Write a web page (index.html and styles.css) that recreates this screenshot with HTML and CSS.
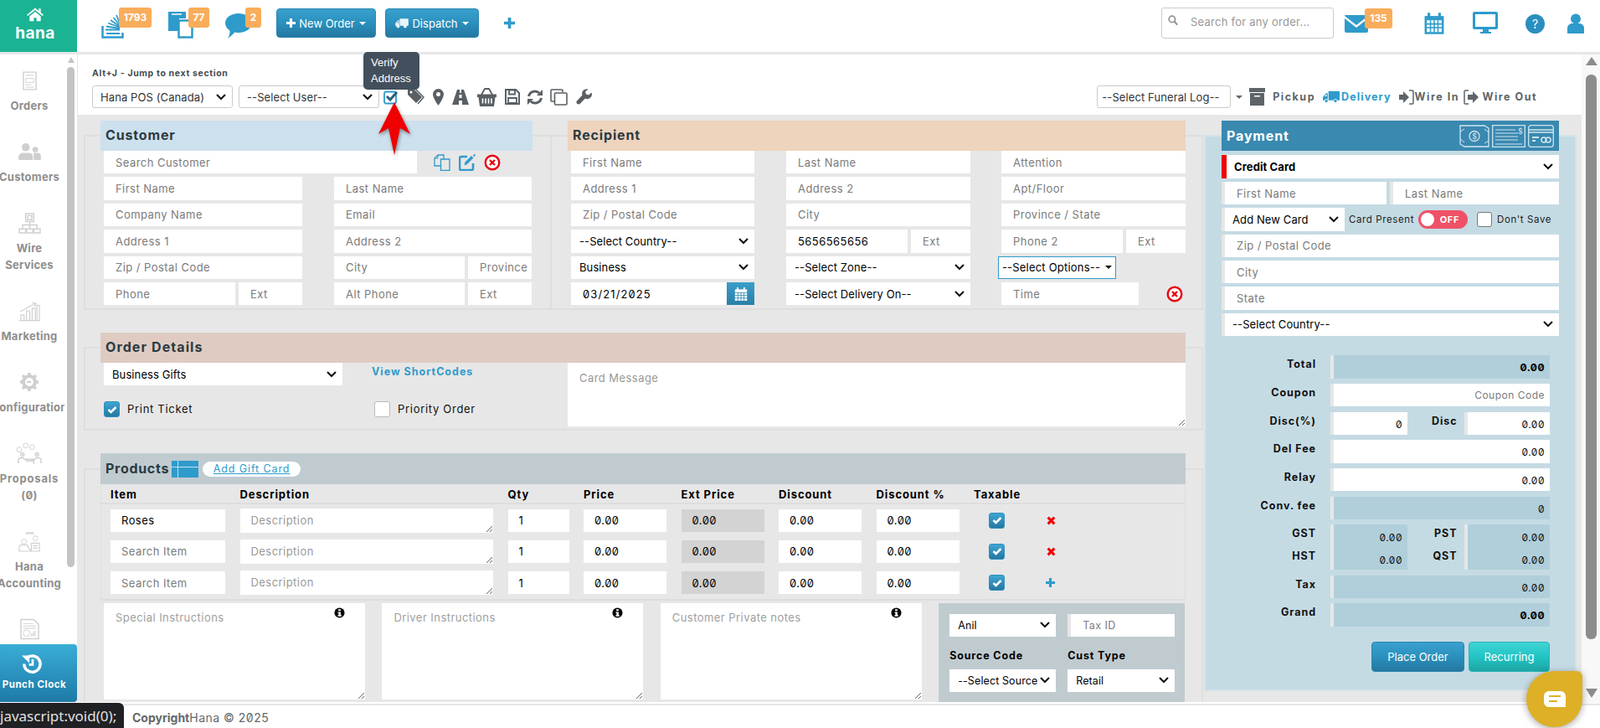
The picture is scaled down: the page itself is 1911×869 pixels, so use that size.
FILE: index.html
```html
<!DOCTYPE html>
<html lang="en">
<head>
<meta charset="utf-8">
<title>Hana POS</title>
<link rel="stylesheet" href="styles.css">
</head>
<body>
<svg class="sprite" aria-hidden="true">
  <symbol id="i-x" viewBox="0 0 20 20"><circle cx="10" cy="10" r="8.3" fill="#fff" stroke="#e8000d" stroke-width="2.4"/><path d="M7 7l6 6M13 7l-6 6" stroke="#e8000d" stroke-width="2.4"/></symbol>
  <symbol id="i-check" viewBox="0 0 14 14"><path d="M2.5 7l3 3 6-6" fill="none" stroke="#fff" stroke-width="2.6"/></symbol>
  <symbol id="i-plus" viewBox="0 0 12 12"><path d="M4.300 0h3.400v4.300H12v3.400H7.700V12H4.300V7.700H0V4.300h4.300z" fill="currentColor"/></symbol>
  <symbol id="i-truck" viewBox="0 0 24 20"><path d="M8 2h15a1 1 0 0 1 1 1v12H8zM1 9l4-4h2v10H0v-4zM2.500 9.500h3V6.800H5z" fill="currentColor"/><circle cx="5" cy="16" r="2.500" fill="currentColor" stroke="#fff"/><circle cx="18" cy="16" r="2.500" fill="currentColor" stroke="#fff"/></symbol>
  <symbol id="i-info" viewBox="0 0 14 14"><circle cx="7" cy="7" r="6.500"/><path d="M5.500 2.500h3v2h-3zM4.800 5.800h3.700v4.200h1v1.500H4.800V10h1V7.300h-1z" fill="#fff"/></symbol>
  <symbol id="i-del" viewBox="0 0 10 10"><path d="M1.500 1.500l7 7M8.500 1.500l-7 7" stroke="#f00000" stroke-width="2.800"/></symbol>
  <symbol id="i-cal" viewBox="0 0 20 22"><path d="M1 4h18v17H1z" fill="currentColor"/><path d="M5 1v5M15 1v5" stroke="currentColor" stroke-width="2.500"/><path d="M3 8h14v11H3z" fill="#fff"/><path d="M3 11.500h14M3 15h14M6.500 8v11M10 8v11M13.500 8v11" stroke="currentColor" stroke-width="1.200"/></symbol>
  <symbol id="i-cal-w" viewBox="0 0 20 22"><path d="M1 4h18v17H1z" fill="#fff"/><path d="M5 1v5M15 1v5" stroke="#fff" stroke-width="2.500"/><path d="M1 9h18M1 13h18M1 17h18M5.500 9v12M10 9v12M14.500 9v12" stroke="#2a86b0" stroke-width="1"/></symbol>
</svg>

<header class="topbar">
  <a class="logo" href="#">
    <svg class="logo-home" viewBox="0 0 24 20"><path d="M12 1L0 11l1.500 1.500L12 4l10.500 8.500L24 11l-4-3.300V2h-3v3.200zM4 13v7h6v-5h4v5h6v-7l-8-6.500z" fill="#fff"/></svg>
    <span>hana</span>
  </a>
  <a class="tool tool-stack" href="#">
    <svg viewBox="0 0 28 32" width="28" height="32"><path d="M1.500 17v13.500h24V25" fill="none" stroke="#2f9bcb" stroke-width="2.500"/><path d="M6 26h16M5 21.500h17M6 17.500l16 2.500M8 13.500l14 5M11 10l11 7.500M14.500 7l8 9.500M18 4l5 12" fill="none" stroke="#2f9bcb" stroke-width="1.800"/></svg>
    <b class="badge">1793</b>
  </a>
  <a class="tool tool-docs" href="#">
    <svg viewBox="0 0 33 33" width="33" height="33"><path d="M1 1h21v8h-8v15H1z" fill="#2f9bcb"/><path d="M5 4h12" stroke="#fff" stroke-width="1.500"/><path d="M13.500 11.500h16v20h-16z" fill="#fff" stroke="#2f9bcb" stroke-width="2.500"/></svg>
    <b class="badge">77</b>
  </a>
  <a class="tool tool-chat" href="#">
    <svg viewBox="0 0 33 32" width="33" height="32"><path d="M17 1c9 0 15.500 5 15.500 11.500S26 24 17 24c-2 0-3 0-4.500-.5C10 26 7 29 4 31c2-3 2.500-6 2.500-9.500C3 19.500 1 16 1 12.500 1 6 8 1 17 1z" fill="#2f9bcb"/></svg>
    <b class="badge">2</b>
  </a>
  <a class="btn btn-order" href="#"><svg class="plus" width="11" height="11"><use href="#i-plus"/></svg>New Order<i class="caret"></i></a>
  <a class="btn btn-dispatch" href="#"><svg class="btn-truck" width="16" height="13"><use href="#i-truck"/></svg>Dispatch<i class="caret"></i></a>
  <a class="add" href="#" aria-label="Add"><svg width="13" height="13"><use href="#i-plus"/></svg></a>
  <label class="search">
    <svg viewBox="0 0 14 14" width="16" height="16"><circle cx="5.700" cy="5.700" r="4.300" fill="none" stroke="#8f8f8f" stroke-width="2"/><path d="M9 9l4 4.500" stroke="#8f8f8f" stroke-width="2.400"/></svg>
    <input type="text" placeholder="Search for any order...">
  </label>
  <a class="tool tool-mail" href="#">
    <svg viewBox="0 0 28 21" width="28" height="21"><path d="M1 0h26a1 1 0 0 1 1 1L14 12 0 1a1 1 0 0 1 1-1zM0 4l14 11L28 4v15a2 2 0 0 1-2 2H2a2 2 0 0 1-2-2z" fill="#2f9bcb"/></svg>
    <b class="badge">135</b>
  </a>
  <svg class="ico-cal" width="26" height="28"><use href="#i-cal"/></svg>
  <svg class="ico-monitor" viewBox="0 0 30 26" width="30" height="26"><path d="M2 0h26a2 2 0 0 1 2 2v17a2 2 0 0 1-2 2H19v3h3v2H9v-2h3v-3H2a2 2 0 0 1-2-2V2a2 2 0 0 1 2-2zm1 3v15h24V3z" fill="#2f9bcb"/></svg>
  <span class="ico-help">?</span>
  <svg class="ico-user" viewBox="0 0 20 24" width="20" height="24"><circle cx="10" cy="6.500" r="6" fill="#2f9bcb"/><path d="M0 24v-6c0-4 3-6 6-6h8c3 0 6 2 6 6v6z" fill="#2f9bcb"/></svg>
</header>

<div class="workspace">
  <aside class="sidebar">
    <nav class="nav">
      <a class="nav-item" href="#"><span class="nav-icon"><svg viewBox="0 0 18 24" width="17" height="23"><path d="M1 1h16v22H1z" fill="none" stroke="#cfcfcf" stroke-width="1.500"/><path d="M4 5h10M4 9h10v5H4zM4 17h7M4 20h10" stroke="#cfcfcf" fill="none"/></svg></span><span>Orders</span></a>
      <a class="nav-item" href="#"><span class="nav-icon"><svg viewBox="0 0 28 21" width="27" height="20"><circle cx="9" cy="5" r="5" fill="#cfcfcf"/><circle cx="21" cy="8" r="3.500" fill="#cfcfcf"/><path d="M0 21v-4c0-3 3-5 5-5h8c2 0 5 2 5 5v4zM19 21v-5c0-2 0-3-1-4h6c2 0 4 1 4 4v5z" fill="#cfcfcf"/></svg></span><span>Customers</span></a>
      <a class="nav-item" href="#"><span class="nav-icon"><svg viewBox="0 0 28 26" width="27" height="25"><path d="M9 1h10v10H9zM11.500 3.500h5v5h-5zM14 11v4M5 20v-5h18v5M14 15v5M1 20h8v5H1zM10 20h8v5h-8zM19 20h8v5h-8z" fill="none" stroke="#cfcfcf" stroke-width="1.500"/></svg></span><span>Wire</span><span>Services</span></a>
      <a class="nav-item" href="#"><span class="nav-icon"><svg viewBox="0 0 28 25" width="27" height="25"><path d="M1 24h26M3 24v-7h4v7M10 24V12h4v12M17 24V9h4v15M23 24V5h3v19M2 13L21 3M17 2l5 1-2 4" fill="none" stroke="#cfcfcf" stroke-width="1.200"/></svg></span><span>Marketing</span></a>
      <a class="nav-item" href="#"><span class="nav-icon"><svg viewBox="0 0 24 24" width="24" height="24"><circle cx="12" cy="12" r="7" fill="none" stroke="#cfcfcf" stroke-width="4"/><path d="M12 1v5M12 18v5M1 12h5M18 12h5M4 4l4 4M16 16l4 4M20 4l-4 4M8 16l-4 4" stroke="#cfcfcf" stroke-width="3.500"/><path d="M9 12h5" stroke="#cfcfcf" stroke-width="2"/></svg></span><span>Configuration</span></a>
      <a class="nav-item" href="#"><span class="nav-icon"><svg viewBox="0 0 34 28" width="33" height="27"><circle cx="4" cy="9" r="3" fill="none" stroke="#cfcfcf"/><circle cx="12" cy="4" r="3" fill="none" stroke="#cfcfcf"/><circle cx="20" cy="6" r="3" fill="none" stroke="#cfcfcf"/><circle cx="8" cy="15" r="3" fill="#dcdcdc"/><circle cx="26" cy="15" r="3" fill="#dcdcdc"/><path d="M3 26v-4c0-2 2-3 5-3l6 4h6l6-4c3 0 5 1 5 3v4M12 21h10v6" fill="none" stroke="#cfcfcf" stroke-width="1.500"/></svg></span><span class="wide">Proposals</span><span>(0)</span></a>
      <a class="nav-item" href="#"><span class="nav-icon"><svg viewBox="0 0 28 26" width="27" height="25"><path d="M8 4h12l-2-3h-8z" fill="#dcdcdc"/><circle cx="7" cy="13" r="3" fill="none" stroke="#cfcfcf"/><circle cx="21" cy="9" r="3" fill="none" stroke="#cfcfcf"/><path d="M1 25v-5c0-2 2-3 4-3h4c2 0 3 1 3 3l4 5zM16 25V15h10v10zM18 18h6M18 21h6" fill="none" stroke="#cfcfcf" stroke-width="1.200"/></svg></span><span>Hana</span><span>Accounting</span></a>
      <a class="nav-item" href="#"><span class="nav-icon"><svg viewBox="0 0 24 26" width="23" height="26"><path d="M1 1h16l6 6v18H1z" fill="none" stroke="#cfcfcf" stroke-width="1.500"/><path d="M4 6h12M4 9h16M4 12h16" stroke="#cfcfcf"/><circle cx="8" cy="18" r="4" fill="none" stroke="#cfcfcf"/><path d="M14 22v-3h2v3M17 22v-6h2v6" stroke="#cfcfcf" fill="none"/></svg></span></a>
    </nav>
    <div class="side-scroll"><i class="up"></i><i class="thumb"></i></div>
    <a class="punch" href="#">
      <svg viewBox="0 0 28 28" width="27" height="27"><path d="M4 14a10 10 0 1 0 3-7" fill="none" stroke="#fff" stroke-width="3.600"/><path d="M1 3.500h9.500V13z" fill="#fff"/><path d="M14.500 8v7H10" fill="none" stroke="#fff" stroke-width="2.800"/></svg>
      <span>Punch Clock</span>
    </a>
  </aside>

  <main class="main">
    <div class="toolbar">
      <p class="hint">Alt+J - Jump to next section</p>
      <div class="tool-row">
        <select class="tsel tsel-pos"><option>Hana POS (Canada)</option></select>
        <select class="tsel tsel-user"><option>--Select User--</option></select>
        <div class="tool-icons">
          <svg width="18" height="18" viewBox="0 0 18 18"><rect x="1" y="2.500" width="14" height="14" rx="2" fill="none" stroke="#2f9bcb" stroke-width="1.800"/><path d="M4 8l4 4 8-9" fill="none" stroke="#2b5e7c" stroke-width="3"/></svg>
          <svg width="21" height="21" viewBox="0 0 21 21"><path d="M1 1h7l10 10-7 7L1 8z" fill="#595f63"/><path d="M10 1l10 10-7 8" fill="none" stroke="#595f63" stroke-width="1.500"/><circle cx="5" cy="5" r="1.500" fill="#fff"/></svg>
          <svg width="13" height="20" viewBox="0 0 13 20"><path d="M6.500 0A6.500 6.500 0 0 0 0 6.500C0 11 6.500 20 6.500 20S13 11 13 6.500A6.500 6.500 0 0 0 6.500 0zm0 9A2.500 2.500 0 1 1 6.500 4a2.500 2.500 0 0 1 0 5z" fill="#595f63"/></svg>
          <svg width="20" height="18" viewBox="0 0 20 18"><path d="M6 0h3v4h2V0h3l6 18h-8v-5H8v5H0zM8.500 6v4h3V6z" fill="#595f63"/></svg>
          <svg width="23" height="22" viewBox="0 0 23 22"><path d="M5 8l4-7h5l4 7" fill="none" stroke="#595f63" stroke-width="1.800"/><path d="M0 7.500h23V11h-1.500L20 22H3L1.500 11H0z" fill="#595f63"/><path d="M6.500 12.500v6M10 12.500v6M13.500 12.500v6M17 12.500v6" stroke="#fff" stroke-width="1.600"/></svg>
          <svg width="18" height="19" viewBox="0 0 18 19"><path d="M1 1h12l4 4v13H1z" fill="none" stroke="#595f63" stroke-width="2"/><path d="M5 1.500h7v5H5zM4 11h10v6H4z" fill="none" stroke="#595f63" stroke-width="1.800"/></svg>
          <svg class="tight" width="20" height="18" viewBox="0 0 20 18"><path d="M2.500 8A7.500 7.500 0 0 1 15 4" fill="none" stroke="#595f63" stroke-width="3"/><path d="M19 0v7h-7z" fill="#595f63"/><path d="M17.500 10A7.500 7.500 0 0 1 5 14" fill="none" stroke="#595f63" stroke-width="3"/><path d="M1 18v-7h7z" fill="#595f63"/></svg>
          <svg class="tight" width="21" height="20" viewBox="0 0 21 20"><path d="M15 4V2a1 1 0 0 0-1-1H2a1 1 0 0 0-1 1v12a1 1 0 0 0 1 1h3" fill="none" stroke="#595f63" stroke-width="1.600"/><rect x="5.500" y="5" width="14.500" height="14" rx="1" fill="none" stroke="#595f63" stroke-width="1.600"/></svg>
          <svg width="19" height="19" viewBox="0 0 19 19"><path d="M18.500 4.500l-3.500 3-3-1-1-3 3.500-3a5.500 5.500 0 0 0-7 7L1 14.500a2.500 2.500 0 0 0 3.500 3.500L11 11.500a5.500 5.500 0 0 0 7.500-7z" fill="#595f63"/></svg>
        </div>
        <div class="tool-right">
          <select class="tsel tsel-log"><option>--Select Funeral Log--</option></select>
          <i class="caret caret-log"></i>
          <svg class="mode-ico" width="19" height="21" viewBox="0 0 19 21"><path d="M0 0h19v5H0zM1 6h17v15H1z" fill="#5e6468"/><path d="M6 9h7v1.500H6z" fill="#fff"/></svg>
          <a class="mode mode-pick" href="#">Pickup</a>
          <svg class="mode-truck" width="20" height="19"><use href="#i-truck"/></svg>
          <a class="mode mode-del" href="#">Delivery</a>
          <svg class="mode-ico2" width="18" height="18" viewBox="0 0 18 18"><path d="M0 6h5V2l7 7-7 7v-4H0z" fill="#5e6468"/><path d="M12 1h4a1 1 0 0 1 1 1v14a1 1 0 0 1-1 1h-4" fill="none" stroke="#5e6468" stroke-width="1.500"/></svg>
          <a class="mode mode-in" href="#">Wire In</a>
          <svg class="mode-ico3" width="18" height="18" viewBox="0 0 18 18"><path d="M6 1H2a1 1 0 0 0-1 1v14a1 1 0 0 0 1 1h4" fill="none" stroke="#5e6468" stroke-width="1.500"/><path d="M5 6h6V2l7 7-7 7v-4H5z" fill="#5e6468"/></svg>
          <a class="mode mode-out" href="#">Wire Out</a>
        </div>
      </div>
    </div>

    <div class="board">
      <div class="forms">
        <div class="top-sets">
          <fieldset class="set set-customer">
            <legend class="head head-customer">Customer</legend>
            <div class="search-row">
              <input class="f search-cust" placeholder="Search Customer">
              <div class="cust-actions">
                <svg width="20" height="20" viewBox="0 0 20 20"><path d="M8 14H1V5l4-4h7v5" fill="none" stroke="#2f9bcb" stroke-width="1.300"/><path d="M8.500 6H15l4 0v13.500H8.500z" fill="none" stroke="#2f9bcb" stroke-width="1.300"/><path d="M1 5h4V1" fill="none" stroke="#2f9bcb"/></svg>
                <svg width="20" height="20" viewBox="0 0 20 20"><path d="M10 3H3a2 2 0 0 0-2 2v12a2 2 0 0 0 2 2h12a2 2 0 0 0 2-2v-6" fill="none" stroke="#2f9bcb" stroke-width="2.600"/><path d="M6.500 13.500l1-4L15 2l2.500 2.500L10 12z" fill="#2f9bcb"/><circle cx="18.500" cy="1.500" r="1.300" fill="#2f9bcb"/></svg>
                <svg width="20" height="20"><use href="#i-x"/></svg>
              </div>
            </div>
            <div class="grid-customer">
              <input class="f s2" placeholder="First Name">
              <input class="f s2b" placeholder="Last Name">
              <input class="f s2" placeholder="Company Name">
              <input class="f s2b" placeholder="Email">
              <input class="f s2" placeholder="Address 1">
              <input class="f s2b" placeholder="Address 2">
              <input class="f s2" placeholder="Zip / Postal Code">
              <input class="f c4" placeholder="City">
              <input class="f" placeholder="Province">
              <input class="f" placeholder="Phone">
              <input class="f" placeholder="Ext">
              <input class="f c4" placeholder="Alt Phone">
              <input class="f" placeholder="Ext">
            </div>
          </fieldset>

          <fieldset class="set set-recipient">
            <legend class="head head-recipient">Recipient</legend>
            <div class="grid-recipient">
              <input class="f r1" placeholder="First Name">
              <input class="f r2" placeholder="Last Name">
              <input class="f r3" placeholder="Attention">
              <input class="f r1" placeholder="Address 1">
              <input class="f r2" placeholder="Address 2">
              <input class="f r3" placeholder="Apt/Floor">
              <input class="f r1" placeholder="Zip / Postal Code">
              <input class="f r2" placeholder="City">
              <input class="f r3" placeholder="Province / State">
              <select class="s r1"><option>--Select Country--</option></select>
              <input class="f c3" value="5656565656">
              <input class="f" placeholder="Ext">
              <input class="f c6" placeholder="Phone 2">
              <input class="f" placeholder="Ext">
              <select class="s r1"><option>Business</option></select>
              <select class="s r2"><option>--Select Zone--</option></select>
              <div class="r3"><a class="opt-btn" href="#">--Select Options--<i class="caret caret-dark"></i></a></div>
              <div class="date r1"><input class="f" value="03/21/2025"><span class="date-btn"><svg width="16" height="18"><use href="#i-cal-w"/></svg></span></div>
              <select class="s r2"><option>--Select Delivery On--</option></select>
              <div class="time r3"><input class="f" placeholder="Time"><svg width="20" height="20"><use href="#i-x"/></svg></div>
            </div>
          </fieldset>
        </div>

        <fieldset class="set set-order">
          <legend class="head head-order">Order Details</legend>
          <div class="grid-order">
            <select class="s order-sel"><option>Business Gifts</option></select>
            <a class="codes" href="#">View ShortCodes</a>
            <textarea class="msg" placeholder="Card Message"></textarea>
            <label class="chk-line"><span class="chk on"><svg width="14" height="14"><use href="#i-check"/></svg></span>Print Ticket</label>
            <label class="chk-line prio"><span class="chk"></span>Priority Order</label>
          </div>
        </fieldset>

        <fieldset class="set set-products">
          <legend class="head head-products">Products<span class="gift-img"></span><a class="gift-link" href="#"><u>Add Gift Card</u></a></legend>
          <div class="table">
            <div class="t-row t-head"><span>Item</span><span>Description</span><span>Qty</span><span>Price</span><span>Ext Price</span><span>Discount</span><span>Discount %</span><span>Taxable</span></div>
            <div class="t-row">
              <input class="f" value="Roses"><textarea class="desc" placeholder="Description"></textarea><input class="f" value="1"><input class="f num" value="0.00"><input class="f num ro" value="0.00"><input class="f num" value="0.00"><input class="f num" value="0.00">
              <span class="chk on tax"><svg width="14" height="14"><use href="#i-check"/></svg></span><svg class="act" width="11" height="11"><use href="#i-del"/></svg>
            </div>
            <div class="t-row">
              <input class="f" placeholder="Search Item"><textarea class="desc" placeholder="Description"></textarea><input class="f" value="1"><input class="f num" value="0.00"><input class="f num ro" value="0.00"><input class="f num" value="0.00"><input class="f num" value="0.00">
              <span class="chk on tax"><svg width="14" height="14"><use href="#i-check"/></svg></span><svg class="act" width="11" height="11"><use href="#i-del"/></svg>
            </div>
            <div class="t-row">
              <input class="f" placeholder="Search Item"><textarea class="desc" placeholder="Description"></textarea><input class="f" value="1"><input class="f num" value="0.00"><input class="f num ro" value="0.00"><input class="f num" value="0.00"><input class="f num" value="0.00">
              <span class="chk on tax"><svg width="14" height="14"><use href="#i-check"/></svg></span><svg class="act act-add" width="11" height="11"><use href="#i-plus"/></svg>
            </div>
          </div>
          <div class="notes">
            <div class="note"><textarea placeholder="Special Instructions"></textarea><svg class="info" width="13" height="13"><use href="#i-info"/></svg></div>
            <div class="note"><textarea placeholder="Driver Instructions"></textarea><svg class="info" width="13" height="13"><use href="#i-info"/></svg></div>
            <div class="note"><textarea placeholder="Customer Private notes"></textarea><svg class="info" width="13" height="13"><use href="#i-info"/></svg></div>
            <div class="extra">
              <select class="s"><option>Anil</option></select>
              <input class="f left-rule" placeholder="Tax ID">
              <b>Source Code</b><b>Cust Type</b>
              <select class="s"><option>--Select Source--</option></select>
              <select class="s"><option>Retail</option></select>
            </div>
          </div>
        </fieldset>
      </div>

      <fieldset class="set set-payment">
        <legend class="head head-payment">Payment
          <span class="pay-icons">
            <svg width="36" height="27" viewBox="0 0 36 27"><path d="M1 1h29l5 3v22H6l-5-3z" fill="none" stroke="#cfe6f0" stroke-width="1.300"/><circle cx="18" cy="13.500" r="6" fill="none" stroke="#cfe6f0" stroke-width="1.300"/><path d="M1 8l5-3M35 19l-5 3M1 17l5 4M35 9l-5-4" stroke="#cfe6f0"/><text x="15.300" y="17" class="pay-dollar">$</text></svg>
            <svg width="40" height="27" viewBox="0 0 40 27"><path d="M.7.7h38.600v25.600H.7z" fill="none" stroke="#cfe6f0" stroke-width="1.300"/><path d="M4 6h24M4 10h27M4 14h27M4 18h27M4 23h32" stroke="#cfe6f0" stroke-width="1.200"/><text x="31" y="11" class="pay-dollar">$</text></svg>
            <svg width="31" height="27" viewBox="0 0 31 27"><rect x=".7" y=".7" width="29.600" height="25.600" rx="3" fill="none" stroke="#cfe6f0" stroke-width="1.300"/><path d="M1 6h29M1 9h29" stroke="#cfe6f0" stroke-width="1.500"/><path d="M5 15h8M5 19h4" stroke="#cfe6f0" stroke-width="2"/><circle cx="19" cy="18" r="3" fill="none" stroke="#cfe6f0" stroke-width="1.500"/><circle cx="24" cy="18" r="3" fill="none" stroke="#cfe6f0" stroke-width="1.500"/></svg>
          </span>
        </legend>
        <div class="pay-form">
          <select class="s pay-type"><option>Credit Card</option></select>
          <div class="pair"><input class="f left-rule" placeholder="First Name"><input class="f left-rule" placeholder="Last Name"></div>
          <div class="card-row">
            <select class="s left-rule card-sel"><option>Add New Card</option></select>
            <span class="card-lab">Card Present</span>
            <span class="toggle"><i></i>OFF</span>
            <span class="chk save"></span>
            <span class="card-lab">Don't Save</span>
          </div>
          <input class="f left-rule" placeholder="Zip / Postal Code">
          <input class="f left-rule" placeholder="City">
          <input class="f left-rule" placeholder="State">
          <select class="s left-rule"><option>--Select Country--</option></select>
        </div>
        <div class="totals">
          <label>Total</label><output class="v strong">0.00</output>
          <label>Coupon</label><input class="v light" placeholder="Coupon Code">
          <label>Disc(%)</label><div class="split"><output class="v light">0</output><label>Disc</label><output class="v light">0.00</output></div>
          <label>Del Fee</label><output class="v light">0.00</output>
          <label>Relay</label><output class="v light">0.00</output>
          <label>Conv. fee</label><output class="v">0</output>
          <div class="stack"><label>GST</label><label>HST</label></div>
          <div class="split split-tall"><output class="v"><span>0.00</span><span>0.00</span></output><div class="stack"><label>PST</label><label>QST</label></div><output class="v"><span>0.00</span><span>0.00</span></output></div>
          <label>Tax</label><output class="v">0.00</output>
          <label>Grand</label><output class="v strong">0.00</output>
        </div>
        <div class="pay-btns">
          <a class="btn btn-place" href="#">Place Order</a>
          <a class="btn btn-recur" href="#">Recurring</a>
        </div>
      </fieldset>
    </div>
  </main>

  <div class="page-scroll"><i class="up"></i><i class="thumb"></i><i class="down"></i></div>
</div>

<footer class="footer"><b>Copyright</b>Hana © 2025</footer>

<div class="tooltip">Verify Address</div>
<svg class="red-arrow" width="40" height="64" viewBox="0 0 40 64"><path d="M19 0l19 38-12-7-7 32-7-32-12 7z" fill="#f00000"/></svg>
<div class="status">javascript:void(0);</div>
<a class="chat" href="#" aria-label="Chat"><svg width="26" height="19" viewBox="0 0 26 19"><path d="M6 0h14a6 6 0 0 1 6 6v13H6a6 6 0 0 1-6-6V6a6 6 0 0 1 6-6z" fill="#fff"/><path d="M6 6h14M6 12h10" stroke="#deb027" stroke-width="2.200"/></svg></a>
</body>
</html>
```
FILE: styles.css
```css
* { box-sizing: border-box; }
html, body { margin: 0; height: 869px; overflow: hidden; }
body {
  display: flex; flex-direction: column; position: relative;
  font: 13px "Inter", "Liberation Sans", sans-serif;
  font-feature-settings: "zero";
  background: #fff; color: #000;
}
a { text-decoration: none; color: inherit; }
.sprite { display: none; }
input, select, textarea { font: inherit; font-feature-settings: "zero"; letter-spacing: .45px; }
::placeholder { color: #7b7b7b; opacity: 1; }
select {
  appearance: none; letter-spacing: .1px;
  background-image: url("data:image/svg+xml,%3Csvg xmlns='http://www.w3.org/2000/svg' width='12' height='8'%3E%3Cpath d='M1 1l5 5 5-5' fill='none' stroke='%23111' stroke-width='2'/%3E%3C/svg%3E");
  background-repeat: no-repeat; background-position: right 7px center; background-size: 12px 8px;
  padding-right: 22px;
}

/* top bar */
.topbar { height: 65px; flex: none; display: flex; align-items: flex-start; border-bottom: 3px solid #e7e7e7; color: #2f9bcb; }
.logo { width: 92px; height: 62px; background: #1ab394; color: #fff; display: flex; flex-direction: column; align-items: center; font: 700 19px "Inter", sans-serif; letter-spacing: .5px; padding: 8px 8px 0 0; flex: none; }
.logo-home { width: 20px; height: 18px; }
.logo span { margin-top: 3px; line-height: 22px; }
.tool { position: relative; display: block; flex: none; }
.tool svg { display: block; }
.badge { position: absolute; top: 0; background: #f9ad5b; color: #fff; border-radius: 3px; font: 700 12px/24px "Inter", sans-serif; text-align: center; height: 24px; }
.tool-stack { margin: 14px 0 0 29px; width: 28px; }
.tool-stack .badge { left: 21px; top: -5px; width: 39px; }
.tool-docs { margin: 13px 0 0 51px; width: 33px; }
.tool-docs .badge { left: 25px; top: -4px; width: 25px; }
.tool-chat { margin: 15px 0 0 35px; width: 33px; }
.tool-chat .badge { left: 25px; top: -6px; width: 19px; }
.btn { display: flex; align-items: center; justify-content: center; color: #fff; border-radius: 4px; font-size: 13px; background: linear-gradient(#3aa0cd, #2a90bd 50%, #2478a0); border: 1px solid #2a87b0; }
.btn-order { width: 119px; height: 35px; margin: 10px 0 0 29px; flex: none; }
.btn-dispatch { width: 112px; height: 35px; margin: 10px 0 0 11px; flex: none; }
.plus { margin-right: 4px; color: #fff; flex: none; }
.btn-truck { margin-right: 4px; color: #e8f4fa; }
.caret { display: inline-block; width: 0; height: 0; border: 4px solid transparent; border-top-color: currentColor; border-bottom: 0; margin-left: 5px; }
.add { margin: 21px 0 0 30px; width: 14px; height: 14px; color: #2f9bcb; flex: none; }
.search { width: 206px; height: 37px; margin: 9px 0 0 771px; border: 1px solid #ccc; border-radius: 3px; display: flex; align-items: flex-start; padding: 6px 0 0 7px; flex: none; }
.search input { border: 0; outline: 0; width: 170px; margin: 2px 0 0 15px; font-size: 13px; padding: 0; letter-spacing: .25px; }
.search ::placeholder { color: #999; }
.tool-mail { margin: 18px 0 0 13px; width: 28px; }
.tool-mail .badge { left: 24px; top: -8px; width: 33px; }
.ico-cal { margin: 14px 0 0 66px; color: #2f9bcb; flex: none; }
.ico-monitor { margin: 14px 0 0 33px; flex: none; }
.ico-help { width: 23px; height: 23px; margin: 17px 0 0 33px; flex: none; border-radius: 50%; background: #2a8fbe; color: #fff; font-size: 14px; line-height: 23px; text-align: center; }
.ico-user { margin: 16px 0 0 27px; flex: none; }

/* workspace */
.workspace { flex: 1; display: flex; min-height: 0; }
.sidebar { width: 93px; flex: none; position: relative; display: flex; flex-direction: column; border-right: 1px solid #e7e7e7; overflow: hidden; }
.nav { flex: 1; width: 77px; overflow: hidden; padding-top: 18px; min-height: 0; }
.nav-item { width: 70px; display: flex; flex-direction: column; align-items: center; margin-bottom: 32px; color: #8e8e8e; font-weight: 700; font-size: 13px; line-height: 20px; letter-spacing: .25px; }
.nav-icon { height: 26px; margin-bottom: 7px; display: flex; align-items: center; justify-content: center; flex: none; }
.nav-item span { white-space: nowrap; }
.nav-item .wide { letter-spacing: .8px; }
.side-scroll { position: absolute; left: 80px; top: 0; width: 9px; height: 612px; display: flex; flex-direction: column; align-items: center; }
.side-scroll .up { width: 0; height: 0; border: 4.5px solid transparent; border-bottom: 7px solid #c4c4c4; border-top: 0; margin-top: 3px; }
.side-scroll .thumb { flex: 1; width: 9px; background: #c4c4c4; border-radius: 5px; margin-top: 5px; }
.punch { flex: none; height: 69px; margin-bottom: 2px; width: 92px; background: linear-gradient(#39aed6, #2a90bd 55%, #1f7ba6); border-radius: 0 4px 4px 0; color: #fff; font-weight: 700; font-size: 11.500px; display: flex; flex-direction: column; align-items: center; padding: 10px 10px 0 0; letter-spacing: .55px; }
.punch svg { margin-right: 6px; }
.punch span { margin-top: 4px; }
.main { flex: 1; min-width: 0; display: flex; flex-direction: column; padding-bottom: 2px; }
.toolbar { height: 72px; flex: none; padding: 16px 53px 0 17px; }
.hint { margin: 0 0 7px; font-weight: 700; font-size: 10.500px; line-height: 14px; color: #444c52; letter-spacing: .65px; }
.tool-row { display: flex; align-items: center; height: 27px; }
.tsel { height: 27px; background-color: #fff; border: 1px solid #ccc; border-radius: 3px; padding-left: 9px; color: #333; }
.tsel-pos { width: 168px; }
.tsel-user { width: 168px; margin-left: 7px; }
.tool-icons { display: flex; align-items: center; gap: 10px; margin-left: 5px; }
.tool-icons .tight { margin-left: -2px; }
.tool-right { margin-left: auto; display: flex; align-items: center; }
.tsel-log { width: 160px; padding-left: 5px; background-image: none; padding-right: 0; }
.caret-log { color: #666; margin-left: 6px; }
.mode { font: 700 12.500px "Inter", sans-serif; letter-spacing: 1.500px; color: #5e6468; white-space: nowrap; }
.mode-ico { margin-left: 8px; }
.mode-pick { margin-left: 9px; }
.mode-truck { margin-left: 9px; color: #2f9bcb; }
.mode-del { color: #2f9bcb; margin-left: 2px; letter-spacing: 1.100px; }
.mode-ico2 { margin-left: 9px; }
.mode-in { margin-left: 1px; }
.mode-ico3 { margin-left: 5.500px; }
.mode-out { margin-left: 4px; }

/* board */
.board { flex: 1; min-height: 0; overflow: hidden; background: #e7e7e7; display: flex; padding: 7px 0 0 7px; }
.forms { flex: 0 0 1338px; }
.top-sets { display: flex; }
.set { margin: 0; min-width: 0; border: 2px solid #dedede; padding: 0; }
.head { padding: 0 0 0 6px; width: 100%; height: 36px; line-height: 35px; font-weight: 700; font-size: 16px; color: #2b3a42; letter-spacing: .85px; }
.head-customer { background: #cce0ee; }
.head-recipient { background: #eed3bd; }
.head-order { background: #dfcbc2; letter-spacing: 1.100px; }
.head-products { background: #c0cbd0; height: 37px; display: flex; align-items: center; letter-spacing: .7px; }
.head-payment { background: #3989b0; color: #fff; display: flex; align-items: center; justify-content: space-between; padding-right: 6px; }
.set-customer { width: 557px; border-right: 0; padding: 0 21px 4px 18px; }
.set-recipient { width: 780px; padding: 0 19px 4px 19px; }
.search-row { display: flex; margin: 0 0 4px 4px; height: 27.400px; }
.cust-actions { display: flex; align-items: center; gap: 10px; margin-left: 20px; }
.f { display: block; width: 100%; height: 100%; min-width: 0; border: 0; background: #fff; padding: 0 0 0 14px; outline: 0; border-radius: 0; }
.s { display: block; width: 100%; height: 100%; min-width: 0; border: 0; background-color: #fff; padding-left: 10px; border-radius: 0; color: #000; }
.search-row .search-cust { width: 374px; flex: none; }
.grid-customer { margin-left: 4px; display: grid; grid-template-columns: 157px 76px 30px 156px 76px; grid-auto-rows: 27.400px; gap: 4px; }
.s2 { grid-column: 1 / 3; }
.s2b { grid-column: 4 / 6; }
.c4 { grid-column: 4; }
.grid-recipient { margin-left: 4px; display: grid; grid-template-columns: 219px 30px 145px 71px 29px 145px 71px; grid-auto-rows: 27.400px; gap: 4px; }
.r1 { grid-column: 1; }
.r2 { grid-column: 3 / 5; }
.r3 { grid-column: 6 / 8; }
.c3 { grid-column: 3; }
.c6 { grid-column: 6; }
.opt-btn { display: flex; align-items: center; justify-content: center; width: 141px; height: 27px; margin-left: -4px; background: #fff; border: 1px solid #2f9bcb; letter-spacing: .2px; white-space: nowrap; }
.caret-dark { color: #111; margin-left: 6px; }
.date { display: flex; }
.date .f { letter-spacing: 1.100px; }
.date-btn { flex: 0 0 33px; background: linear-gradient(#3a9fcb, #2a7ea6); display: flex; align-items: center; justify-content: center; }
.time { display: flex; align-items: center; }
.time .f { width: 164px; flex: none; }
.time svg { margin-left: 33px; }
.set-order { width: 1337px; margin-top: 27px; padding: 0 19px 3px 18px; }
.grid-order { margin-left: 4px; display: grid; grid-template-columns: 320px 234px 738px; grid-template-rows: 27px 19px 30px; }
.order-sel { width: 285px; }
.codes { font-weight: 700; color: #2f9bcb; letter-spacing: 1px; font-size: 12.500px; line-height: 22px; }
.msg { grid-column: 3; grid-row: 1 / 4; border: 0; outline: 0; padding: 10px 14px; background: #fff; width: 100%; height: 76px; }
.msg::placeholder { color: #999; }
.chk-line { grid-row: 3; display: flex; align-items: flex-start; letter-spacing: .7px; line-height: 19px; color: #111; }
.prio { margin-left: 3px; }
.chk { flex: none; width: 19px; height: 19px; background: #fff; border: 1px solid #bbb; border-radius: 3px; margin-right: 9px; display: inline-flex; align-items: center; justify-content: center; }
.chk.on { background: linear-gradient(#3ea6d3, #2478a0); border-color: #2f8fbb; }
.set-products { width: 1337px; margin-top: 27px; padding: 0 19px 0 18px; border-bottom: 0; }
.gift-img { width: 32px; height: 20px; margin-left: 3px; background: linear-gradient(#bfe0ef, #bfe0ef) 0 7px / 100% 1px no-repeat, linear-gradient(#bfe0ef, #bfe0ef) 7px 0 / 1px 100% no-repeat, #2f9bcb; }
.gift-link { margin-left: 5px; width: 117px; height: 18px; background: #fff; border-radius: 9px; color: #2f9bcb; font-size: 12.500px; font-weight: 400; line-height: 18px; text-align: center; letter-spacing: .9px; }
.table { border-left: 1px solid #dedede; border-right: 1px solid #dedede; border-bottom: 2px solid #dedede; }
.t-row { display: grid; grid-template-columns: 137px 302.500px 73px 99px 99px 99px 99px 55px 100px; column-gap: 17.500px; align-items: center; height: 37.400px; padding-left: 11px; }
.t-row > .f { height: 27px; }
.t-head { height: 24px; border-bottom: 2px solid #dedede; font-weight: 700; font-size: 13px; letter-spacing: .9px; align-items: start; line-height: 12px; padding-top: 6px; }
.t-row .f { padding-left: 13px; }
.ro { background: #d3d3d3; }
.desc { height: 29px; border: 0; outline: 0; padding: 6px 13px 0; background: #fff; width: 100%; display: block; }
.desc::placeholder { color: #999; }
.tax { margin: 0 0 0 18px; }
.act { margin-left: 14px; display: block; }
.act-add { margin-left: 13px; color: #2f9bcb; }
.notes { display: flex; margin-top: 3px; padding-left: 4px; gap: 20.400px; align-items: flex-start; }
.note { position: relative; flex: 0 0 312px; }
.note textarea { display: block; width: 100%; height: 115px; border: 0; outline: 0; padding: 9px 14px; background: #fff; }
.note ::placeholder { color: #a0a0a0; }
.info { position: absolute; top: 5px; right: 24px; }
.extra { width: 294px; height: 125px; flex: none; background: #c0cbd0; padding: 13px 12px 0 13px; display: grid; grid-template-columns: 127px 128px; grid-template-rows: 27px 39px 27px; column-gap: 14px; font-size: 12.500px; letter-spacing: .85px; }
.extra b { align-self: center; padding-top: 6px; }
.left-rule { border-left: 4px solid #e7e7e7; }

/* payment */
.set-payment { flex: 0 0 445px; background: #c5dbe4; border-color: #d5e3e9; padding: 0 19px 0 19px; height: 681px; }
.pay-icons { display: flex; align-items: center; gap: 3px; }
.pay-dollar { fill: #cfe6f0; font-size: 9px; font-weight: 400; }
.pay-form { margin-top: 5.450px; display: grid; grid-auto-rows: 27.400px; gap: 4px; }
.pay-form > select { padding-left: 9px; }
.pay-form > .pay-type { border-left: 6px solid #f00000; font-weight: 700; }
.pair { display: grid; grid-template-columns: 197px 202px; gap: 4px; }
.card-row { display: flex; align-items: center; font-size: 11.500px; letter-spacing: .6px; color: #222; }
.card-row .card-sel { flex: 0 0 147px; font-size: 13px; padding-left: 9px; }
.card-lab { margin-left: 5px; white-space: nowrap; }
.toggle { flex: none; width: 59px; height: 22px; margin-left: 5px; background: #ef5266; border-radius: 11px; color: #fff; font-weight: 700; font-size: 11px; display: flex; align-items: center; justify-content: flex-end; padding-right: 10px; position: relative; }
.toggle i { position: absolute; left: 3px; top: 3px; width: 16px; height: 16px; border-radius: 50%; background: #fff; }
.save { width: 18px; height: 18px; margin: 0 1px 0 11px; border-color: #777; }
.totals { margin-top: 23px; display: grid; grid-template-columns: 113px 262px; column-gap: 17px; row-gap: 6.300px; }
.totals label { font-weight: 700; font-size: 12.500px; letter-spacing: .95px; text-align: right; line-height: 21px; color: #111; }
.v { display: block; width: 100%; height: 27.400px; border: 0; border-left: 4px solid #e7e7e7; background: #b0cfda; text-align: right; padding: 3px 6px 0 0; font-size: 12px; line-height: 24px; letter-spacing: .5px; outline: 0; color: #111; }
input.v { padding-top: 0; }
.light { background: #fff; }
.strong { font-weight: 700; color: #000; }
.split { display: grid; grid-template-columns: 92px 51px 102px; column-gap: 8.500px; }
.split label { text-align: right; }
.split-tall { height: 54px; }
.split-tall .v span { display: block; line-height: 27px; }
.split-tall .v { padding-top: 2px; height: 54px; }
.stack { display: flex; flex-direction: column; height: 54px; }
.stack label { height: 27px; }
.pay-btns { display: flex; justify-content: flex-end; gap: 5px; margin: 18px 11px 0 0; }
.btn-place { width: 111px; height: 36px; }
.btn-recur { width: 97px; height: 36px; background: linear-gradient(#40d4d4, #22c4c4 50%, #1ea5a5); border-color: #25b8b8; }

.page-scroll { flex: 0 0 22px; background: #f8f8f8; display: flex; flex-direction: column; align-items: center; padding: 3px 0 0 1px; height: 775px; position: relative; }
.page-scroll .up { width: 0; height: 0; border: 7px solid transparent; border-bottom: 10px solid #8c8c8c; border-top: 0; }
.page-scroll .thumb { width: 13px; height: 674px; background: #8c8c8c; border-radius: 6px; margin-top: 11px; }
.page-scroll .down { width: 0; height: 0; border: 7px solid transparent; border-top: 11px solid #8c8c8c; border-bottom: 0; margin-top: 59px; }

/* footer */
.footer { height: 29px; flex: none; border-top: 2px solid #e7e7e7; padding-left: 158px; font-size: 14px; line-height: 29px; color: #62686c; letter-spacing: .5px; }
.footer b { letter-spacing: 0; }

/* overlays */
.tooltip { position: absolute; left: 434px; top: 62px; width: 67px; height: 45px; background: #434f5c; border-radius: 5px; color: #fff; font: 13px/19px "Liberation Sans", sans-serif; padding: 3px 4px 0 9px; }
.red-arrow { position: absolute; left: 452px; top: 122px; filter: drop-shadow(1px 2px 2px rgba(0,0,0,.4)); }
.status { position: absolute; left: 0; bottom: 0; width: 148px; height: 30px; background: #202124; color: #e0e0e0; border-radius: 0 6px 0 0; font: 17px/32px "Noto Sans", sans-serif; overflow: hidden; white-space: nowrap; }
.chat { position: absolute; left: 1823px; top: 801px; width: 67px; height: 67px; background: #deb027; border-radius: 50% 10% 50% 50%; box-shadow: 0 2px 8px rgba(0,0,0,.35); display: flex; align-items: center; justify-content: center; }
```
